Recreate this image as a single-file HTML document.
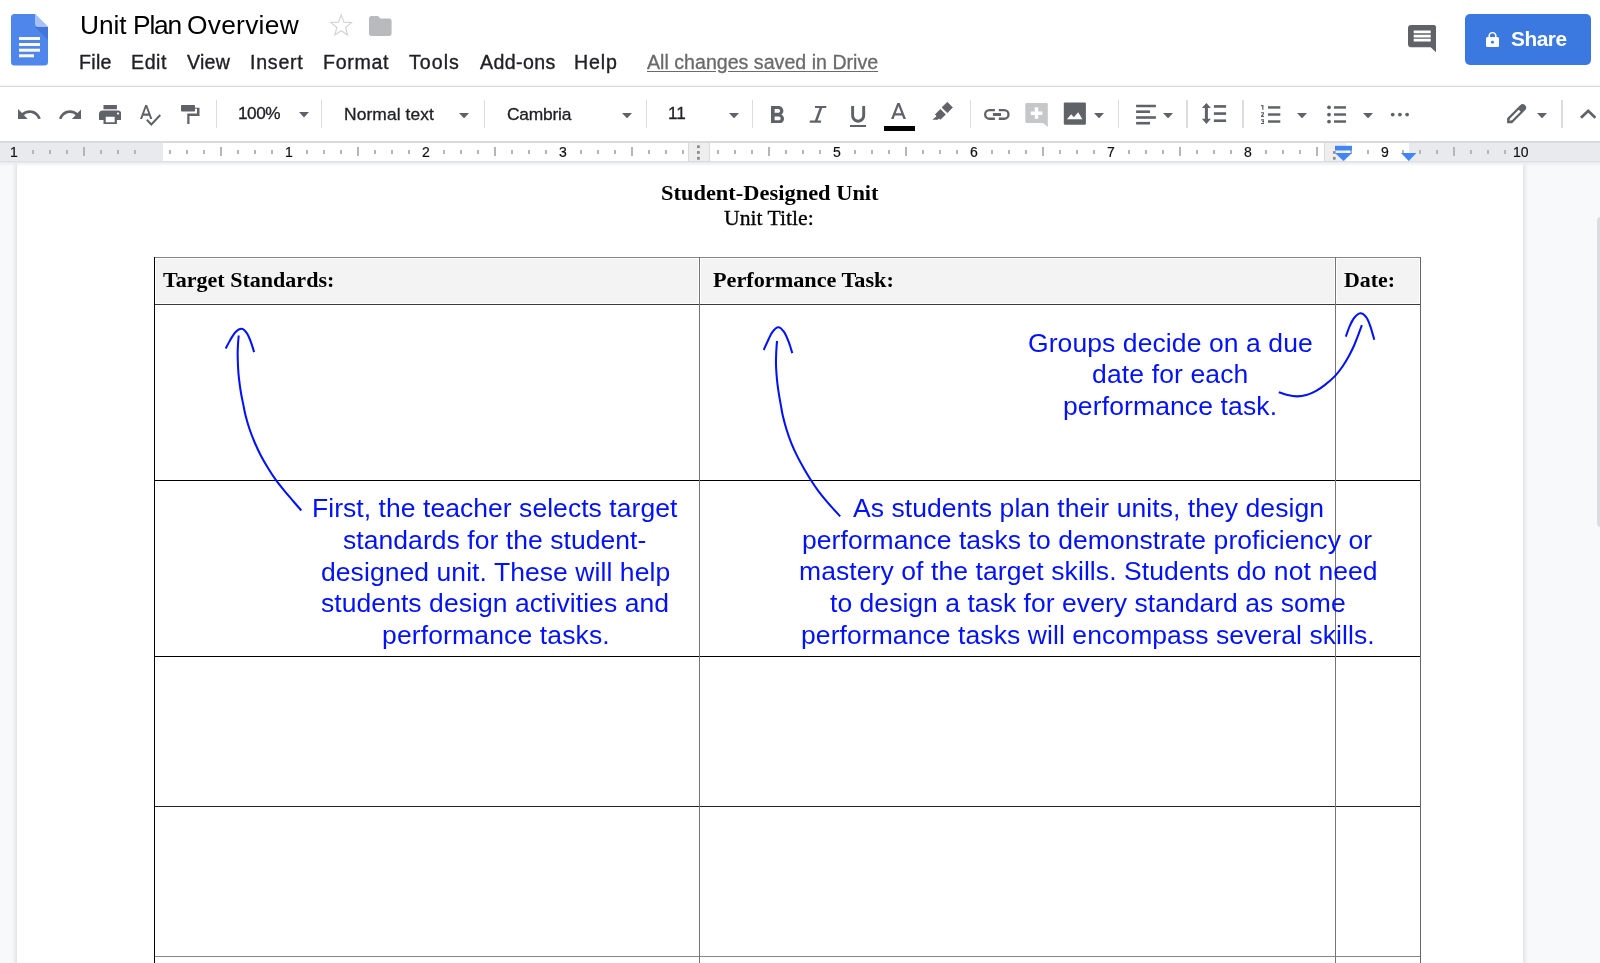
<!DOCTYPE html>
<html lang="en">
<head>
<meta charset="utf-8">
<title>Unit Plan Overview - Google Docs</title>
<style>
html,body{margin:0;padding:0;}
body{width:1600px;height:963px;overflow:hidden;position:relative;background:#f8f9fa;font-family:"Liberation Sans",sans-serif;}
.abs{position:absolute;}
#header{position:absolute;left:0;top:0;width:1600px;height:86px;background:#fff;}
#hline{position:absolute;left:0;top:85px;width:1600px;height:3px;background:linear-gradient(#f2f3f5 0 33.3%,#d9dbdf 33.3% 66.7%,#f0f1f3 66.7%);}
#toolbar{position:absolute;left:0;top:87px;width:1600px;height:54px;background:#fff;}
#tline{position:absolute;left:0;top:141px;width:1600px;height:1.5px;background:#d8dade;}
#ruler{position:absolute;left:0;top:142.5px;width:1600px;height:18.5px;background:#e8eaed;}
#rulerw{position:absolute;left:163px;top:142.5px;width:1246px;height:18.5px;background:#fff;}
#rshadow{position:absolute;left:0;top:161px;width:1600px;height:5px;background:linear-gradient(#d9dbdf,#eceef0 40%,rgba(248,249,250,0));}
.tk{position:absolute;display:block;width:1.8px;background:#b2b6bb;}
.sep{position:absolute;top:100px;width:1.5px;height:28px;background:#dadce0;}
#page{position:absolute;left:17px;top:162px;width:1506px;height:801px;background:#fff;}
#pshl{position:absolute;left:12px;top:162px;width:5px;height:801px;background:linear-gradient(to right,rgba(248,249,250,0),#e3e5e8);}
#pshr{position:absolute;left:1523px;top:162px;width:5px;height:801px;background:linear-gradient(to right,#e3e5e8,rgba(248,249,250,0));}
#scroll{position:absolute;left:1596.5px;top:217px;width:8px;height:310px;background:#dadce0;border-radius:4px;}
.tx{display:block;will-change:transform;}
#share{position:absolute;left:1465px;top:14.3px;width:126px;height:50.8px;background:#3b78e0;border-radius:5px;}
.hl{position:absolute;background:#000;height:1px;}
.vl{position:absolute;background:#000;width:1px;}
</style>
</head>
<body>
<div id="header"></div>
<div id="hline"></div>
<div id="toolbar"></div>
<div id="tline"></div>
<div id="ruler"></div>
<div id="rulerw"></div>
<div id="page"></div>
<div id="pshl"></div><div id="pshr"></div>
<div id="rshadow"></div>
<div id="scroll"></div>
<div id="share"></div>

<!-- docs logo -->
<svg class="abs" style="left:11px;top:14px" width="37" height="51.5" viewBox="0 0 37 51.5">
  <path d="M3.5 0H24L37 13V48a3.5 3.5 0 0 1-3.500 3.500H3.500A3.500 3.500 0 0 1 0 48V3.500A3.500 3.500 0 0 1 3.500 0z" fill="#4f86ec"/>
  <path d="M24 13L37 26V13z" fill="#4175dc"/>
  <path d="M24 0L37 13H27.500A3.500 3.500 0 0 1 24 9.500z" fill="#a6c1f6"/>
  <rect x="8" y="23" width="21" height="3" fill="#fdf8ee"/>
  <rect x="8" y="29" width="21" height="3" fill="#fdf8ee"/>
  <rect x="8" y="34.700" width="21" height="3" fill="#fdf8ee"/>
  <rect x="8" y="40.300" width="15" height="3" fill="#fdf8ee"/>
</svg>

<!-- toolbar separators -->
<i class="sep" style="left:215.5px"></i><i class="sep" style="left:320.5px"></i><i class="sep" style="left:483.5px"></i>
<i class="sep" style="left:645.5px"></i><i class="sep" style="left:751.5px"></i><i class="sep" style="left:969.5px"></i>
<i class="sep" style="left:1117.5px"></i><i class="sep" style="left:1186px"></i><i class="sep" style="left:1242px"></i>
<i class="sep" style="left:1561px"></i>
<!-- text colour bar -->
<div class="abs" style="left:884px;top:125.6px;width:31px;height:5.2px;background:#000"></div>

<!-- ruler -->
<i class="tk" style="left:31.73px;top:150.2px;height:3.6px"></i>
<i class="tk" style="left:48.85px;top:150.2px;height:3.6px"></i>
<i class="tk" style="left:65.97px;top:150.2px;height:3.6px"></i>
<i class="tk" style="left:83.10px;top:147.4px;height:8.8px"></i>
<i class="tk" style="left:100.22px;top:150.2px;height:3.6px"></i>
<i class="tk" style="left:117.35px;top:150.2px;height:3.6px"></i>
<i class="tk" style="left:134.47px;top:150.2px;height:3.6px"></i>
<i class="tk" style="left:168.72px;top:150.2px;height:3.6px"></i>
<i class="tk" style="left:185.85px;top:150.2px;height:3.6px"></i>
<i class="tk" style="left:202.97px;top:150.2px;height:3.6px"></i>
<i class="tk" style="left:220.10px;top:147.4px;height:8.8px"></i>
<i class="tk" style="left:237.22px;top:150.2px;height:3.6px"></i>
<i class="tk" style="left:254.35px;top:150.2px;height:3.6px"></i>
<i class="tk" style="left:271.48px;top:150.2px;height:3.6px"></i>
<i class="tk" style="left:305.73px;top:150.2px;height:3.6px"></i>
<i class="tk" style="left:322.85px;top:150.2px;height:3.6px"></i>
<i class="tk" style="left:339.98px;top:150.2px;height:3.6px"></i>
<i class="tk" style="left:357.10px;top:147.4px;height:8.8px"></i>
<i class="tk" style="left:374.23px;top:150.2px;height:3.6px"></i>
<i class="tk" style="left:391.35px;top:150.2px;height:3.6px"></i>
<i class="tk" style="left:408.48px;top:150.2px;height:3.6px"></i>
<i class="tk" style="left:442.73px;top:150.2px;height:3.6px"></i>
<i class="tk" style="left:459.85px;top:150.2px;height:3.6px"></i>
<i class="tk" style="left:476.98px;top:150.2px;height:3.6px"></i>
<i class="tk" style="left:494.10px;top:147.4px;height:8.8px"></i>
<i class="tk" style="left:511.23px;top:150.2px;height:3.6px"></i>
<i class="tk" style="left:528.35px;top:150.2px;height:3.6px"></i>
<i class="tk" style="left:545.48px;top:150.2px;height:3.6px"></i>
<i class="tk" style="left:579.73px;top:150.2px;height:3.6px"></i>
<i class="tk" style="left:596.85px;top:150.2px;height:3.6px"></i>
<i class="tk" style="left:613.98px;top:150.2px;height:3.6px"></i>
<i class="tk" style="left:631.10px;top:147.4px;height:8.8px"></i>
<i class="tk" style="left:648.23px;top:150.2px;height:3.6px"></i>
<i class="tk" style="left:665.35px;top:150.2px;height:3.6px"></i>
<i class="tk" style="left:682.48px;top:150.2px;height:3.6px"></i>
<i class="tk" style="left:716.73px;top:150.2px;height:3.6px"></i>
<i class="tk" style="left:733.85px;top:150.2px;height:3.6px"></i>
<i class="tk" style="left:750.98px;top:150.2px;height:3.6px"></i>
<i class="tk" style="left:768.10px;top:147.4px;height:8.8px"></i>
<i class="tk" style="left:785.23px;top:150.2px;height:3.6px"></i>
<i class="tk" style="left:802.35px;top:150.2px;height:3.6px"></i>
<i class="tk" style="left:819.48px;top:150.2px;height:3.6px"></i>
<i class="tk" style="left:853.73px;top:150.2px;height:3.6px"></i>
<i class="tk" style="left:870.85px;top:150.2px;height:3.6px"></i>
<i class="tk" style="left:887.98px;top:150.2px;height:3.6px"></i>
<i class="tk" style="left:905.10px;top:147.4px;height:8.8px"></i>
<i class="tk" style="left:922.23px;top:150.2px;height:3.6px"></i>
<i class="tk" style="left:939.35px;top:150.2px;height:3.6px"></i>
<i class="tk" style="left:956.48px;top:150.2px;height:3.6px"></i>
<i class="tk" style="left:990.73px;top:150.2px;height:3.6px"></i>
<i class="tk" style="left:1007.85px;top:150.2px;height:3.6px"></i>
<i class="tk" style="left:1024.97px;top:150.2px;height:3.6px"></i>
<i class="tk" style="left:1042.10px;top:147.4px;height:8.8px"></i>
<i class="tk" style="left:1059.22px;top:150.2px;height:3.6px"></i>
<i class="tk" style="left:1076.35px;top:150.2px;height:3.6px"></i>
<i class="tk" style="left:1093.47px;top:150.2px;height:3.6px"></i>
<i class="tk" style="left:1127.72px;top:150.2px;height:3.6px"></i>
<i class="tk" style="left:1144.85px;top:150.2px;height:3.6px"></i>
<i class="tk" style="left:1161.97px;top:150.2px;height:3.6px"></i>
<i class="tk" style="left:1179.10px;top:147.4px;height:8.8px"></i>
<i class="tk" style="left:1196.22px;top:150.2px;height:3.6px"></i>
<i class="tk" style="left:1213.35px;top:150.2px;height:3.6px"></i>
<i class="tk" style="left:1230.47px;top:150.2px;height:3.6px"></i>
<i class="tk" style="left:1264.72px;top:150.2px;height:3.6px"></i>
<i class="tk" style="left:1281.85px;top:150.2px;height:3.6px"></i>
<i class="tk" style="left:1298.97px;top:150.2px;height:3.6px"></i>
<i class="tk" style="left:1316.10px;top:147.4px;height:8.8px"></i>
<i class="tk" style="left:1333.22px;top:150.2px;height:3.6px"></i>
<i class="tk" style="left:1350.35px;top:150.2px;height:3.6px"></i>
<i class="tk" style="left:1367.47px;top:150.2px;height:3.6px"></i>
<i class="tk" style="left:1401.72px;top:150.2px;height:3.6px"></i>
<i class="tk" style="left:1418.85px;top:150.2px;height:3.6px"></i>
<i class="tk" style="left:1435.97px;top:150.2px;height:3.6px"></i>
<i class="tk" style="left:1453.10px;top:147.4px;height:8.8px"></i>
<i class="tk" style="left:1470.22px;top:150.2px;height:3.6px"></i>
<i class="tk" style="left:1487.35px;top:150.2px;height:3.6px"></i>
<i class="tk" style="left:1504.47px;top:150.2px;height:3.6px"></i>
<div class="abs" style="left:688px;top:142.400px;width:21.800px;height:19.400px;background:#eeeeee;border:1px solid #d8d9db;box-sizing:border-box"></div>
<div class="abs" style="left:1324px;top:142.400px;width:21.800px;height:19.400px;background:#eeeeee;border:1px solid #d8d9db;border-right:0;box-sizing:border-box"></div>
<svg class="abs" style="left:688px;top:142px" width="24" height="20" viewBox="0 0 24 20"><g fill="#8c8c8c"><rect x="9" y="3.300" width="2.800" height="2.800"/><rect x="9" y="9.100" width="2.800" height="2.700"/><rect x="9" y="14.900" width="2.800" height="2.800"/></g></svg>
<svg class="abs" style="left:1325px;top:142px" width="100" height="20" viewBox="0 0 100 20">
  <g fill="#8c8c8c"><rect x="8" y="9.100" width="2.600" height="2.700"/><rect x="8" y="14.900" width="2.600" height="2.800"/></g>
  <rect x="10" y="3.800" width="17" height="4.700" fill="#4285f4"/>
  <path d="M10 11h17l-8.500 8z" fill="#4285f4"/>
  <path d="M76 11h15.400l-7.700 8z" fill="#4285f4"/>
</svg>

<!-- table -->
<div class="abs" style="left:155.5px;top:258.6px;width:542.6px;height:44.5px;background:#f3f3f3"></div>
<div class="abs" style="left:700.8px;top:258.6px;width:633.4px;height:44.5px;background:#f3f3f3"></div>
<div class="abs" style="left:1336.8px;top:258.6px;width:82.6px;height:44.5px;background:#f3f3f3"></div>
<div class="hl" style="left:154px;top:257px;width:1267px;background:#858585;height:1.2px"></div>
<div class="hl" style="left:154px;top:304px;width:1267px;background:#3a3a3a;height:1.2px"></div>
<div class="hl" style="left:154px;top:480px;width:1267px;background:#000;height:1.2px"></div>
<div class="hl" style="left:154px;top:656px;width:1267px;background:#000;height:1.2px"></div>
<div class="hl" style="left:154px;top:806px;width:1267px;background:#222;height:1.2px"></div>
<div class="hl" style="left:154px;top:956.2px;width:1267px;background:#858585;height:1.2px"></div>
<div class="vl" style="left:154px;top:257px;height:706px;background:#000;width:1.3px"></div>
<div class="vl" style="left:699px;top:257px;height:706px;background:#757575;width:1.2px"></div>
<div class="vl" style="left:1335px;top:257px;height:706px;background:#757575;width:1.2px"></div>
<div class="vl" style="left:1420px;top:257px;height:706px;background:#666;width:1.2px"></div>

<!-- arrows -->
<svg class="abs" style="left:0;top:0" width="1600" height="963" viewBox="0 0 1600 963" fill="none" stroke="#0212f6" stroke-width="2.05" stroke-linecap="butt" stroke-linejoin="round">
  <path d="M301.30 510.50C299.73 508.68 294.85 503.05 291.90 499.60C288.95 496.15 286.28 493.08 283.60 489.80C280.92 486.52 278.40 483.53 275.80 479.90C273.20 476.27 270.50 472.07 268.00 468.00C265.50 463.93 263.05 459.83 260.80 455.50C258.55 451.17 256.41 446.50 254.50 442.00C252.59 437.50 250.85 432.97 249.35 428.50C247.85 424.03 246.49 419.10 245.50 415.20C244.51 411.30 244.10 408.52 243.40 405.10C242.70 401.68 241.92 398.17 241.30 394.70C240.68 391.23 240.17 387.77 239.70 384.30C239.23 380.83 238.80 377.37 238.50 373.90C238.20 370.43 238.04 366.95 237.90 363.50C237.76 360.05 237.63 356.40 237.65 353.20C237.67 350.00 237.82 347.25 238.00 344.30C238.18 341.35 238.58 336.97 238.70 335.50"/>
  <path d="M225.70 348.50C226.48 347.02 228.75 342.42 230.40 339.65C232.05 336.88 233.70 333.72 235.60 331.90C237.50 330.08 239.90 328.50 241.80 328.75C243.70 329.00 245.43 331.06 247.00 333.40C248.57 335.74 250.02 339.68 251.20 342.80C252.38 345.92 253.62 350.55 254.10 352.10"/>
  <path d="M840.20 516.40C838.23 514.22 832.00 507.48 828.40 503.30C824.80 499.12 821.50 495.15 818.60 491.30C815.70 487.45 813.45 484.02 811.00 480.20C808.55 476.38 806.17 472.37 803.90 468.40C801.62 464.43 799.43 460.57 797.35 456.40C795.27 452.22 793.22 447.88 791.40 443.35C789.58 438.82 787.90 433.89 786.45 429.20C785.00 424.51 783.63 419.22 782.70 415.20C781.77 411.18 781.47 408.52 780.85 405.10C780.23 401.68 779.56 398.17 779.00 394.70C778.44 391.23 777.92 387.77 777.50 384.30C777.08 380.83 776.76 377.37 776.50 373.90C776.24 370.43 776.01 366.95 775.96 363.50C775.91 360.05 776.10 355.93 776.20 353.20C776.30 350.47 776.42 349.13 776.55 347.10C776.68 345.07 776.92 342.02 777.00 341.00"/>
  <path d="M763.70 350.00C764.40 348.45 766.43 343.72 767.90 340.70C769.37 337.68 770.77 334.15 772.50 331.90C774.23 329.65 776.33 327.20 778.25 327.20C780.17 327.20 782.27 329.48 784.00 331.90C785.73 334.32 787.22 338.16 788.60 341.70C789.98 345.24 791.68 351.24 792.30 353.15"/>
  <path d="M1278.80 392.20C1280.28 392.68 1284.62 394.41 1287.65 395.10C1290.68 395.79 1293.89 396.35 1297.00 396.35C1300.11 396.35 1303.18 395.96 1306.30 395.10C1309.42 394.24 1312.58 392.90 1315.70 391.20C1318.82 389.50 1321.72 387.50 1325.00 384.90C1328.28 382.30 1332.45 378.71 1335.40 375.60C1338.35 372.49 1340.45 369.53 1342.70 366.25C1344.95 362.97 1347.00 359.36 1348.90 355.90C1350.80 352.44 1352.55 348.97 1354.10 345.50C1355.65 342.03 1356.90 338.48 1358.20 335.10C1359.50 331.72 1361.28 326.85 1361.90 325.20"/>
  <path d="M1345.80 336.70C1346.40 335.05 1348.02 329.92 1349.40 326.80C1350.78 323.68 1352.28 320.25 1354.10 318.00C1355.92 315.75 1358.32 313.48 1360.30 313.30C1362.28 313.12 1364.35 314.82 1366.00 316.90C1367.65 318.98 1368.82 321.98 1370.20 325.80C1371.58 329.62 1373.62 337.47 1374.30 339.80"/>
</svg>

<!-- custom toolbar glyphs -->
<svg class="abs" style="left:0;top:0" width="1600" height="963" viewBox="0 0 1600 963" fill="#5f6368">
  <path d="M815 106H826.250V108.100H822.200L817.600 120.600H821V122.750H809.750V120.600H814.900L819.500 108.100H815Z"/>
  <path d="M947.400 102.200L952.500 107.400L947.400 112.800L941.900 107.400Z" stroke="#5f6368" stroke-width="0.6" stroke-linejoin="round"/>
  <path d="M940.400 109L945.800 114.400L940.400 119.800L939 118.400L937.800 119.800L932.300 119.800L936.200 116.400L936.200 115.400L934.900 114.400Z"/>
  <!-- align -->
  <rect x="1136.100" y="104.750" width="19.800" height="2.500"/><rect x="1136.100" y="110.400" width="13.900" height="2.600"/>
  <rect x="1136.100" y="116.200" width="19.800" height="2.600"/><rect x="1136.100" y="121.900" width="13.900" height="2.600"/>
  <!-- line spacing -->
  <path d="M1206.400 102.900L1210.900 108H1207.900V118.800H1210.900L1206.400 123.900L1201.900 118.800H1204.900V108H1201.900Z"/>
  <rect x="1213.900" y="105.100" width="12.200" height="2.650"/><rect x="1213.900" y="112.250" width="12.200" height="2.650"/><rect x="1213.900" y="119.400" width="12.200" height="2.650"/>
  <!-- numbered list lines -->
  <rect x="1268" y="106.200" width="12.300" height="2.450"/><rect x="1268" y="113.300" width="12.300" height="2.450"/><rect x="1268" y="120.300" width="12.300" height="2.450"/>
  <!-- bulleted list -->
  <circle cx="1329" cy="107.300" r="1.900"/><circle cx="1329" cy="114.550" r="1.900"/><circle cx="1329" cy="121.600" r="1.900"/>
  <rect x="1334" y="106.200" width="12" height="2.450"/><rect x="1334" y="113.300" width="12" height="2.450"/><rect x="1334" y="120.300" width="12" height="2.450"/>
  <!-- more -->
  <circle cx="1392.700" cy="114.550" r="1.900"/><circle cx="1399.900" cy="114.550" r="1.900"/><circle cx="1407.100" cy="114.550" r="1.900"/>
  <!-- pencil -->
  <path fill-rule="evenodd" d="M1507.100 123.200L1507.100 118.300L1520.330 105.030A3.500 3.500 0 0 1 1525.270 109.970L1512.100 123.200ZM1510.080 118.430L1518.780 109.730L1520.620 111.570L1511.920 120.270L1509.400 120.800Z"/>
  <!-- link -->
  <g fill="none" stroke="#5f6368" stroke-width="2.300"><path d="M994.900 110.150H989.450a4.300 4.300 0 0 0 0 8.600H994.900"/><path d="M998.800 110.150H1004.200a4.300 4.300 0 0 1 0 8.600H998.800"/></g>
  <rect x="992.900" y="113.050" width="8.100" height="2.900"/>
  <!-- add comment -->
  <path fill="#c5c7c9" d="M1026.500 103H1046.600a1.200 1.200 0 0 1 1.200 1.200V127L1043 123H1026.500a1.200 1.200 0 0 1-1.200-1.200V104.200a1.200 1.200 0 0 1 1.200-1.200Z"/>
  <path fill="#fff" d="M1034.750 107.250H1038.200V111.400H1042.400V114.900H1038.200V118.800H1034.750V114.900H1030.800V111.400H1034.750Z"/>
  <!-- image -->
  <rect x="1063.800" y="102.400" width="22.100" height="22.350" rx="1.200"/>
  <path fill="#fff" d="M1066.900 119.300L1071.200 114.300L1073.900 117.200L1078.200 112.200L1082.400 119.300Z"/>
</svg>

<svg class="abs" style="left:0;top:0" width="420" height="60" viewBox="0 0 420 60"><polygon points="341.20,14.88 343.90,22.17 351.47,22.56 345.57,27.46 347.55,35.00 341.20,30.74 334.85,35.00 336.83,27.46 330.93,22.56 338.50,22.17" fill="none" stroke="#cfd1d4" stroke-width="1.1" stroke-linejoin="miter"/></svg>

<svg style="position:absolute;left:18.20px;top:108.70px" width="22.80" height="10.30" viewBox="2.000 7.000 20.470 9.000" preserveAspectRatio="none"><path fill="#5f6368" d="M12.5 8c-2.65 0-5.05.99-6.9 2.6L2 7v9h9l-3.62-3.62c1.39-1.16 3.16-1.88 5.12-1.88 3.54 0 6.55 2.31 7.6 5.5l2.37-.78C21.08 11.03 17.15 8 12.5 8z"/></svg>
<svg style="position:absolute;left:58.70px;top:108.70px" width="22.50" height="10.30" viewBox="1.540 7.000 20.460 9.000" preserveAspectRatio="none"><path fill="#5f6368" d="M18.4 10.6C16.55 8.99 14.15 8 11.5 8c-4.65 0-8.58 3.03-9.96 7.22L3.9 16c1.05-3.19 4.05-5.5 7.6-5.5 1.95 0 3.73.72 5.12 1.88L13 16h9V7l-3.6 3.6z"/></svg>
<svg style="position:absolute;left:98.60px;top:104.60px" width="22.40" height="19.40" viewBox="2.000 3.000 20.000 18.000" preserveAspectRatio="none"><path fill="#5f6368" d="M19 8H5c-1.66 0-3 1.34-3 3v6h4v4h12v-4h4v-6c0-1.66-1.34-3-3-3zm-3 11H8v-5h8v5zm3-7c-.55 0-1-.45-1-1s.45-1 1-1 1 .45 1 1-.45 1-1 1zm-1-9H6v4h12V3z"/></svg>
<svg style="position:absolute;left:140.00px;top:104.60px" width="21.00" height="21.00" viewBox="2.460 3.000 20.540 19.500" preserveAspectRatio="none"><path fill="#5f6368" d="M12.45 16h2.09L9.43 3H7.57L2.46 16h2.09l1.12-3h5.64l1.14 3zm-6.02-5L8.5 5.48 10.57 11H6.43zm15.16.59l-8.09 8.09L9.83 16l-1.41 1.41 5.09 5.09L23 13l-1.41-1.41z"/></svg>
<svg style="position:absolute;left:181.00px;top:104.75px" width="18.50" height="19.25" viewBox="-0.000 0.150 18.500 19.250" preserveAspectRatio="none"><path fill="#5f6368" d="M0.8 0.15H13.2a.8.8 0 0 1 .8.8V2.9H18.5V11.15H8.5V19.4H6.25V8.65H16V3.9H14V5.85a.8.8 0 0 1-.8.8H.8a.8.8 0 0 1-.8-.8V.95a.8.8 0 0 1 .8-.8z"/></svg>
<svg style="position:absolute;left:771.00px;top:105.60px" width="13.00" height="17.40" viewBox="7.000 4.000 10.750 14.000" preserveAspectRatio="none"><path fill="#5f6368" d="M15.6 10.79c.97-.67 1.65-1.77 1.65-2.79 0-2.26-1.75-4-4-4H7v14h7.04c2.09 0 3.71-1.7 3.71-3.79 0-1.52-.86-2.82-2.15-3.42zM10 6.5h3c.83 0 1.5.67 1.5 1.5s-.67 1.5-1.5 1.5h-3v-3zm3.5 9H10v-3h3.5c.83 0 1.5.67 1.5 1.5s-.67 1.5-1.5 1.5z"/></svg>
<svg style="position:absolute;left:849.70px;top:105.60px" width="16.30" height="21.40" viewBox="5.000 3.000 14.000 18.000" preserveAspectRatio="none"><path fill="#5f6368" d="M12 17c3.31 0 6-2.69 6-6V3h-2.5v8c0 1.93-1.57 3.5-3.5 3.5S8.5 12.93 8.5 11V3H6v8c0 3.31 2.69 6 6 6zm-7 2v2h14v-2H5z"/></svg>
<svg style="position:absolute;left:891.00px;top:103.00px" width="15.00" height="16.00" viewBox="5.500 3.000 12.990 14.000" preserveAspectRatio="none"><path fill="#5f6368" d="M11 3L5.5 17h2.25l1.12-3h6.25l1.12 3h2.25L13 3h-2zm-1.38 9L12 5.67 14.38 12H9.62z"/></svg>
<svg style="position:absolute;left:1260.60px;top:105.10px" width="3.70" height="19.10" viewBox="2.000 4.000 3.000 16.000" preserveAspectRatio="none"><path fill="#5f6368" d="M2 17h2v.5H3v1h1v.5H2v1h3v-4H2v1zm1-9h1V4H2v1h1v3zm-1 3h1.8L2 13.1v.9h3v-1H3.2L5 10.9V10H2v1z"/></svg>
<svg style="position:absolute;left:1580.00px;top:109.30px" width="16.40" height="9.70" viewBox="6.000 8.000 12.000 7.410" preserveAspectRatio="none"><path fill="#5f6368" d="M12 8l-6 6 1.41 1.41L12 10.83l4.59 4.580L18 14z"/></svg>
<svg style="position:absolute;left:1408.00px;top:24.80px" width="28.40" height="27.70" viewBox="2.000 2.000 20.000 20.000" preserveAspectRatio="none"><path fill="#5f6368" d="M21.99 4c0-1.1-.89-2-1.99-2H4c-1.1 0-2 .9-2 2v12c0 1.1.9 2 2 2h14l4 4-.01-18zM18 14H6v-2h12v2zm0-3H6V9h12v2zm0-3H6V6h12v2z"/></svg>
<svg style="position:absolute;left:1486.00px;top:31.60px" width="13.00" height="15.20" viewBox="4.000 1.000 16.000 21.000" preserveAspectRatio="none"><path fill="#fff" d="M18 8h-1V6c0-2.76-2.24-5-5-5S7 3.240 7 6v2H6c-1.100 0-2 .9-2 2v10c0 1.100.9 2 2 2h12c1.100 0 2-.9 2-2V10c0-1.100-.9-2-2-2zm-6 9c-1.100 0-2-.9-2-2s.9-2 2-2 2 .9 2 2-.9 2-2 2zm3.100-9H8.900V6c0-1.710 1.390-3.100 3.100-3.100 1.710 0 3.100 1.390 3.100 3.100v2z"/></svg>
<svg style="position:absolute;left:369.40px;top:16.00px" width="22.60" height="20.00" viewBox="2.000 4.000 20.000 16.000" preserveAspectRatio="none"><path fill="#b8babd" d="M10 4H4c-1.100 0-1.990.9-1.990 2L2 18c0 1.100.9 2 2 2h16c1.100 0 2-.9 2-2V8c0-1.100-.9-2-2-2h-8l-2-2z"/></svg>
<svg style="position:absolute;left:298.60px;top:112.20px" width="10.00" height="5.40" viewBox="7.000 10.000 10.000 5.000" preserveAspectRatio="none"><path fill="#5f6368" d="M7 10l5 5 5-5z"/></svg>
<svg style="position:absolute;left:459.00px;top:112.80px" width="10.10" height="5.40" viewBox="7.000 10.000 10.000 5.000" preserveAspectRatio="none"><path fill="#5f6368" d="M7 10l5 5 5-5z"/></svg>
<svg style="position:absolute;left:621.70px;top:112.80px" width="10.10" height="5.40" viewBox="7.000 10.000 10.000 5.000" preserveAspectRatio="none"><path fill="#5f6368" d="M7 10l5 5 5-5z"/></svg>
<svg style="position:absolute;left:729.20px;top:112.80px" width="10.10" height="5.40" viewBox="7.000 10.000 10.000 5.000" preserveAspectRatio="none"><path fill="#5f6368" d="M7 10l5 5 5-5z"/></svg>
<svg style="position:absolute;left:1094.40px;top:112.80px" width="10.10" height="5.40" viewBox="7.000 10.000 10.000 5.000" preserveAspectRatio="none"><path fill="#5f6368" d="M7 10l5 5 5-5z"/></svg>
<svg style="position:absolute;left:1162.80px;top:112.80px" width="10.10" height="5.40" viewBox="7.000 10.000 10.000 5.000" preserveAspectRatio="none"><path fill="#5f6368" d="M7 10l5 5 5-5z"/></svg>
<svg style="position:absolute;left:1297.00px;top:112.80px" width="10.10" height="5.40" viewBox="7.000 10.000 10.000 5.000" preserveAspectRatio="none"><path fill="#5f6368" d="M7 10l5 5 5-5z"/></svg>
<svg style="position:absolute;left:1362.50px;top:112.80px" width="10.10" height="5.40" viewBox="7.000 10.000 10.000 5.000" preserveAspectRatio="none"><path fill="#5f6368" d="M7 10l5 5 5-5z"/></svg>
<svg style="position:absolute;left:1537.40px;top:112.80px" width="10.10" height="5.40" viewBox="7.000 10.000 10.000 5.000" preserveAspectRatio="none"><path fill="#5f6368" d="M7 10l5 5 5-5z"/></svg>
<span class="tx" style="position:absolute;white-space:pre;line-height:26.3px;font:400 26.3px/26.3px 'Liberation Sans', sans-serif;color:#000;top:12.00px;left:79.88px;letter-spacing:-0.107px;">Unit </span>
<span class="tx" style="position:absolute;white-space:pre;line-height:26.3px;font:400 26.3px/26.3px 'Liberation Sans', sans-serif;color:#000;top:12.00px;left:132.93px;letter-spacing:-1.142px;">Plan </span>
<span class="tx" style="position:absolute;white-space:pre;line-height:26.3px;font:400 26.3px/26.3px 'Liberation Sans', sans-serif;color:#000;top:12.00px;left:186.66px;letter-spacing:0.297px;">Overview</span>
<span class="tx" style="position:absolute;white-space:pre;line-height:19.6px;font:400 19.6px/19.6px 'Liberation Sans', sans-serif;color:#202124;top:53.00px;left:79.43px;letter-spacing:0.314px;-webkit-text-stroke:0.35px #202124;">File</span>
<span class="tx" style="position:absolute;white-space:pre;line-height:19.6px;font:400 19.6px/19.6px 'Liberation Sans', sans-serif;color:#202124;top:53.00px;left:131.06px;letter-spacing:0.563px;-webkit-text-stroke:0.35px #202124;">Edit</span>
<span class="tx" style="position:absolute;white-space:pre;line-height:19.6px;font:400 19.6px/19.6px 'Liberation Sans', sans-serif;color:#202124;top:53.00px;left:187.11px;letter-spacing:0.256px;-webkit-text-stroke:0.35px #202124;">View</span>
<span class="tx" style="position:absolute;white-space:pre;line-height:19.6px;font:400 19.6px/19.6px 'Liberation Sans', sans-serif;color:#202124;top:53.00px;left:250.01px;letter-spacing:0.761px;-webkit-text-stroke:0.35px #202124;">Insert</span>
<span class="tx" style="position:absolute;white-space:pre;line-height:19.6px;font:400 19.6px/19.6px 'Liberation Sans', sans-serif;color:#202124;top:53.00px;left:323.02px;letter-spacing:0.675px;-webkit-text-stroke:0.35px #202124;">Format</span>
<span class="tx" style="position:absolute;white-space:pre;line-height:19.6px;font:400 19.6px/19.6px 'Liberation Sans', sans-serif;color:#202124;top:53.00px;left:409.31px;letter-spacing:1.042px;-webkit-text-stroke:0.35px #202124;">Tools</span>
<span class="tx" style="position:absolute;white-space:pre;line-height:19.6px;font:400 19.6px/19.6px 'Liberation Sans', sans-serif;color:#202124;top:53.00px;left:479.79px;letter-spacing:0.386px;-webkit-text-stroke:0.35px #202124;">Add-ons</span>
<span class="tx" style="position:absolute;white-space:pre;line-height:19.6px;font:400 19.6px/19.6px 'Liberation Sans', sans-serif;color:#202124;top:53.00px;left:574.06px;letter-spacing:0.907px;-webkit-text-stroke:0.35px #202124;">Help</span>
<span class="tx" style="position:absolute;white-space:pre;line-height:19.6px;font:400 19.6px/19.6px 'Liberation Sans', sans-serif;color:#6a6a6a;top:53.00px;left:647.30px;letter-spacing:0.011px;text-decoration:underline;text-underline-offset:2px;-webkit-text-stroke:0.3px #6a6a6a;">All changes saved in Drive</span>
<span class="tx" style="position:absolute;white-space:pre;line-height:20.8px;font:700 20.8px/20.8px 'Liberation Sans', sans-serif;color:#fff;top:29.00px;left:1511.37px;letter-spacing:-0.430px;">Share</span>
<span class="tx" style="position:absolute;white-space:pre;line-height:17.2px;font:400 17.2px/17.2px 'Liberation Sans', sans-serif;color:#202124;top:105.00px;left:237.57px;letter-spacing:-0.477px;-webkit-text-stroke:0.3px #202124;">100%</span>
<span class="tx" style="position:absolute;white-space:pre;line-height:17.4px;font:400 17.4px/17.4px 'Liberation Sans', sans-serif;color:#202124;top:106.00px;left:344.27px;letter-spacing:0.093px;-webkit-text-stroke:0.3px #202124;">Normal text</span>
<span class="tx" style="position:absolute;white-space:pre;line-height:17.4px;font:400 17.4px/17.4px 'Liberation Sans', sans-serif;color:#202124;top:106.00px;left:506.58px;letter-spacing:-0.213px;-webkit-text-stroke:0.3px #202124;">Cambria</span>
<span class="tx" style="position:absolute;white-space:pre;line-height:17.2px;font:400 17.2px/17.2px 'Liberation Sans', sans-serif;color:#202124;top:105.00px;left:668.39px;letter-spacing:-0.065px;-webkit-text-stroke:0.3px #202124;">11</span>
<span class="tx" style="position:absolute;white-space:pre;line-height:21px;font:700 21px/21px 'Liberation Serif', serif;color:#000;top:183.00px;left:660.59px;transform:scaleX(1.0686);transform-origin:0 0;">Student-Designed Unit</span>
<span class="tx" style="position:absolute;white-space:pre;line-height:21px;font:400 21px/21px 'Liberation Serif', serif;color:#000;top:208.00px;left:723.95px;transform:scaleX(1.0313);transform-origin:0 0;-webkit-text-stroke:0.3px #000;">Unit Title:</span>
<span class="tx" style="position:absolute;white-space:pre;line-height:21px;font:700 21px/21px 'Liberation Serif', serif;color:#000;top:270.00px;left:162.69px;transform:scaleX(1.0502);transform-origin:0 0;">Target Standards:</span>
<span class="tx" style="position:absolute;white-space:pre;line-height:21px;font:700 21px/21px 'Liberation Serif', serif;color:#000;top:270.00px;left:712.64px;transform:scaleX(1.0585);transform-origin:0 0;">Performance Task:</span>
<span class="tx" style="position:absolute;white-space:pre;line-height:21px;font:700 21px/21px 'Liberation Serif', serif;color:#000;top:270.00px;left:1344.06px;transform:scaleX(1.0424);transform-origin:0 0;">Date:</span>
<span class="tx" style="position:absolute;white-space:pre;line-height:26.5px;font:400 26.5px/26.5px 'Liberation Sans', sans-serif;color:#0212f6;top:495.00px;left:312.37px;letter-spacing:0.048px;">First, the teacher selects target</span>
<span class="tx" style="position:absolute;white-space:pre;line-height:26.5px;font:400 26.5px/26.5px 'Liberation Sans', sans-serif;color:#0212f6;top:527.00px;left:343.35px;letter-spacing:0.055px;">standards for the student-</span>
<span class="tx" style="position:absolute;white-space:pre;line-height:26.5px;font:400 26.5px/26.5px 'Liberation Sans', sans-serif;color:#0212f6;top:559.00px;left:320.95px;letter-spacing:0.068px;">designed unit. These will help</span>
<span class="tx" style="position:absolute;white-space:pre;line-height:26.5px;font:400 26.5px/26.5px 'Liberation Sans', sans-serif;color:#0212f6;top:590.00px;left:321.35px;letter-spacing:0.062px;">students design activities and</span>
<span class="tx" style="position:absolute;white-space:pre;line-height:26.5px;font:400 26.5px/26.5px 'Liberation Sans', sans-serif;color:#0212f6;top:622.00px;left:381.51px;letter-spacing:0.141px;">performance tasks.</span>
<span class="tx" style="position:absolute;white-space:pre;line-height:26.5px;font:400 26.5px/26.5px 'Liberation Sans', sans-serif;color:#0212f6;top:495.00px;left:852.56px;letter-spacing:0.063px;">As students plan their units, they design</span>
<span class="tx" style="position:absolute;white-space:pre;line-height:26.5px;font:400 26.5px/26.5px 'Liberation Sans', sans-serif;color:#0212f6;top:527.00px;left:802.03px;letter-spacing:0.064px;">performance tasks to demonstrate proficiency or</span>
<span class="tx" style="position:absolute;white-space:pre;line-height:26.5px;font:400 26.5px/26.5px 'Liberation Sans', sans-serif;color:#0212f6;top:558.00px;left:798.54px;letter-spacing:0.084px;">mastery of the target skills. Students do not need</span>
<span class="tx" style="position:absolute;white-space:pre;line-height:26.5px;font:400 26.5px/26.5px 'Liberation Sans', sans-serif;color:#0212f6;top:590.00px;left:830.02px;letter-spacing:0.038px;">to design a task for every standard as some</span>
<span class="tx" style="position:absolute;white-space:pre;line-height:26.5px;font:400 26.5px/26.5px 'Liberation Sans', sans-serif;color:#0212f6;top:622.00px;left:800.76px;letter-spacing:0.080px;">performance tasks will encompass several skills.</span>
<span class="tx" style="position:absolute;white-space:pre;line-height:26.5px;font:400 26.5px/26.5px 'Liberation Sans', sans-serif;color:#0212f6;top:330.00px;left:1028.03px;letter-spacing:0.087px;">Groups decide on a due</span>
<span class="tx" style="position:absolute;white-space:pre;line-height:26.5px;font:400 26.5px/26.5px 'Liberation Sans', sans-serif;color:#0212f6;top:361.00px;left:1092.24px;letter-spacing:0.139px;">date for each</span>
<span class="tx" style="position:absolute;white-space:pre;line-height:26.5px;font:400 26.5px/26.5px 'Liberation Sans', sans-serif;color:#0212f6;top:393.00px;left:1063.26px;letter-spacing:0.119px;">performance task.</span>
<span class="tx" style="position:absolute;white-space:pre;line-height:14px;font:400 14px/14px 'Liberation Sans', sans-serif;color:#111;top:145.00px;left:10.40px;-webkit-text-stroke:0.2px #111;">1</span>
<span class="tx" style="position:absolute;white-space:pre;line-height:14px;font:400 14px/14px 'Liberation Sans', sans-serif;color:#111;top:145.00px;left:285.10px;-webkit-text-stroke:0.2px #111;">1</span>
<span class="tx" style="position:absolute;white-space:pre;line-height:14px;font:400 14px/14px 'Liberation Sans', sans-serif;color:#111;top:145.00px;left:422.10px;-webkit-text-stroke:0.2px #111;">2</span>
<span class="tx" style="position:absolute;white-space:pre;line-height:14px;font:400 14px/14px 'Liberation Sans', sans-serif;color:#111;top:145.00px;left:559.10px;-webkit-text-stroke:0.2px #111;">3</span>
<span class="tx" style="position:absolute;white-space:pre;line-height:14px;font:400 14px/14px 'Liberation Sans', sans-serif;color:#111;top:145.00px;left:833.10px;-webkit-text-stroke:0.2px #111;">5</span>
<span class="tx" style="position:absolute;white-space:pre;line-height:14px;font:400 14px/14px 'Liberation Sans', sans-serif;color:#111;top:145.00px;left:970.10px;-webkit-text-stroke:0.2px #111;">6</span>
<span class="tx" style="position:absolute;white-space:pre;line-height:14px;font:400 14px/14px 'Liberation Sans', sans-serif;color:#111;top:145.00px;left:1107.10px;-webkit-text-stroke:0.2px #111;">7</span>
<span class="tx" style="position:absolute;white-space:pre;line-height:14px;font:400 14px/14px 'Liberation Sans', sans-serif;color:#111;top:145.00px;left:1244.10px;-webkit-text-stroke:0.2px #111;">8</span>
<span class="tx" style="position:absolute;white-space:pre;line-height:14px;font:400 14px/14px 'Liberation Sans', sans-serif;color:#111;top:145.00px;left:1380.50px;-webkit-text-stroke:0.2px #111;">9</span>
<span class="tx" style="position:absolute;white-space:pre;line-height:14px;font:400 14px/14px 'Liberation Sans', sans-serif;color:#111;top:145.00px;left:1513.21px;-webkit-text-stroke:0.2px #111;">10</span>
</body>
</html>
